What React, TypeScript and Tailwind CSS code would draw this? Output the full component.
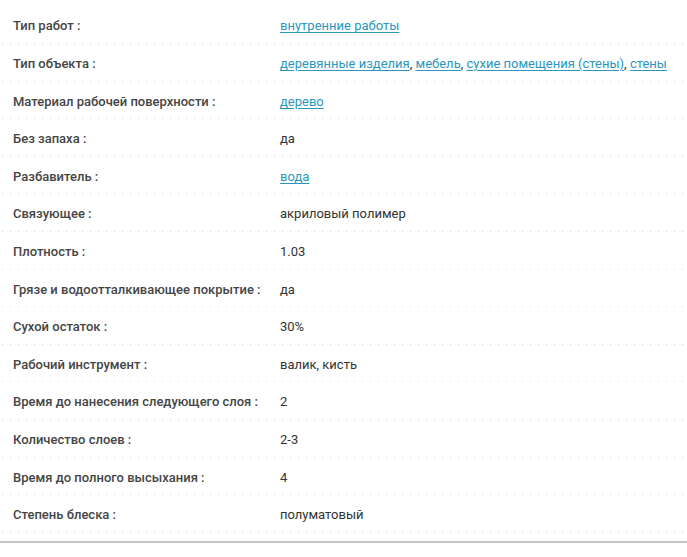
import React from "react";

type Part = { text: string; link?: boolean };
type Row = { label: string; value: Part[] };

const L = (text: string): Part => ({ text, link: true });
const T = (text: string): Part => ({ text });

const rows: Row[] = [
  { label: "Тип работ :", value: [L("внутренние работы")] },
  {
    label: "Тип объекта :",
    value: [L("деревянные изделия"), T(", "), L("мебель"), T(", "), L("сухие помещения (стены)"), T(", "), L("стены")],
  },
  { label: "Материал рабочей поверхности :", value: [L("дерево")] },
  { label: "Без запаха :", value: [T("да")] },
  { label: "Разбавитель :", value: [L("вода")] },
  { label: "Связующее :", value: [T("акриловый полимер")] },
  { label: "Плотность :", value: [T("1.03")] },
  { label: "Грязе и водоотталкивающее покрытие :", value: [T("да")] },
  { label: "Сухой остаток :", value: [T("30%")] },
  { label: "Рабочий инструмент :", value: [T("валик, кисть")] },
  { label: "Время до нанесения следующего слоя :", value: [T("2")] },
  { label: "Количество слоев :", value: [T("2-3")] },
  { label: "Время до полного высыхания :", value: [T("4")] },
  { label: "Степень блеска :", value: [T("полуматовый")] },
];

export default function App() {
  return (
    <div className="w-[687px] h-[557px] bg-white overflow-hidden font-['Roboto',sans-serif] text-[13px] leading-[15.6px]">
      <div className="pt-[6.4px]">
        {rows.map((r, i) => (
          <div key={i}>
            <div className="flex pt-[12px] pb-[9px]">
              <div className="w-[280px] shrink-0 pl-[13px] font-medium text-[#454545]">{r.label}</div>
              <div className="text-[#333]">
                {r.value.map((p, j) =>
                  p.link ? (
                    <a key={j} href="#" className="text-[#2b97bd] underline underline-offset-2">
                      {p.text}
                    </a>
                  ) : (
                    <span key={j}>{p.text}</span>
                  )
                )}
              </div>
            </div>
            <div className="h-px ml-[2px] bg-[linear-gradient(to_right,#cfcfcf_1px,transparent_1px)] bg-[length:8px_1px]" />
          </div>
        ))}
      </div>
      <div className="mt-[8.5px] h-[2px] bg-[#c4c4c4]" />
    </div>
  );
}
